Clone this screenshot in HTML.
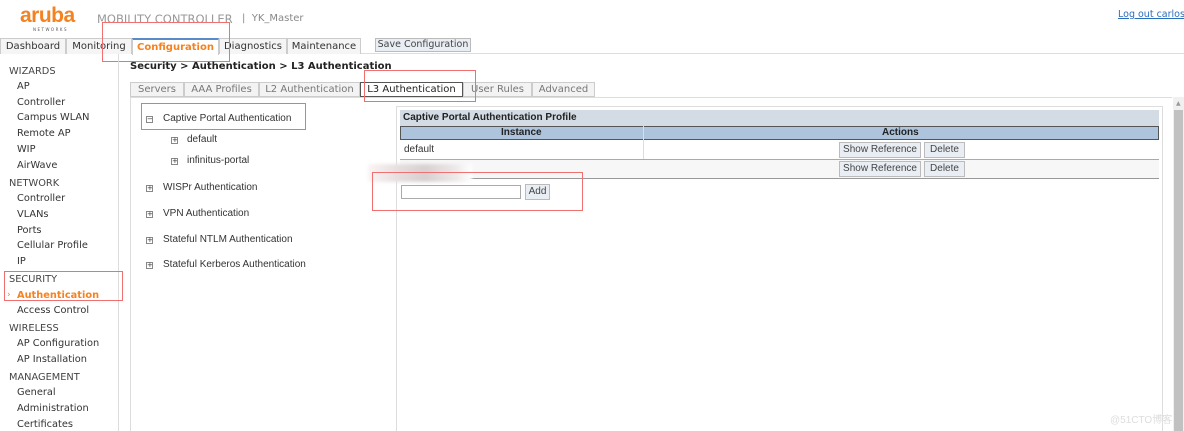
<!DOCTYPE html>
<html><head><meta charset="utf-8"><style>
*{margin:0;padding:0;box-sizing:border-box}
body{width:1184px;height:431px;overflow:hidden;background:#fff;font-family:"DejaVu Sans",Verdana,sans-serif;font-size:9.5px;color:#333;position:relative}
.a{position:absolute;white-space:nowrap}
.red{position:absolute;border:1px solid #f07070}
.tab{position:absolute;top:38px;height:16px;border:1px solid #ccc;border-bottom:none;background:#f3f3f3;font-size:10px;text-align:center;line-height:15px;color:#333}
.st{position:absolute;top:82px;height:15px;border:1px solid #ccc;background:#f3f3f3;font-size:10px;line-height:14px;text-align:center;color:#777}
.sb{position:absolute;left:17px;font-size:9.8px;color:#333}
.sh{position:absolute;left:9px;font-size:9.8px;color:#444}
.tr{position:absolute;font-family:"Liberation Sans",Tahoma,sans-serif;font-size:10px;color:#333}
.pm{position:absolute;width:7px;height:7px;border:1px solid #888;font-size:7px;line-height:5px;text-align:center;color:#333}
.btn{position:absolute;height:16px;border:1px solid #bbb;background:#e8eef4;font-size:10px;line-height:14px;text-align:center;color:#444;font-family:"Liberation Sans",Tahoma,sans-serif}
</style></head><body>
<div class="a" style="left:20px;top:4px;font-family:'Liberation Sans',sans-serif;font-weight:bold;font-size:21px;color:#f58220;letter-spacing:-0.5px">aruba</div>
<div class="a" style="left:33px;top:27px;font-size:4px;letter-spacing:1.5px;color:#555">NETWORKS</div>
<div class="a" style="left:97px;top:12px;font-size:11.5px;color:#999">MOBILITY CONTROLLER</div>
<div class="a" style="left:242px;top:13px;font-size:10px;color:#888">|&nbsp; YK_Master</div>
<div class="a" style="left:1118px;top:9px;font-size:9.5px;color:#2a6ebb;text-decoration:underline">Log out carlos</div>
<div class="a" style="left:0;top:53px;width:1184px;border-top:1px solid #ddd"></div>
<div class="tab" style="left:0;width:66px;background:#f5f5f5">Dashboard</div>
<div class="tab" style="left:66px;width:66px;background:#f5f5f5">Monitoring</div>
<div class="tab" style="left:132px;width:87px;background:#fff;border-top:2px solid #5b8ac9;color:#f58220;font-weight:bold;height:17px">Configuration</div>
<div class="tab" style="left:219px;width:68px;background:#f5f5f5">Diagnostics</div>
<div class="tab" style="left:287px;width:74px;background:#f5f5f5">Maintenance</div>
<div class="btn" style="left:375px;top:38px;width:96px;height:14px;line-height:12px;font-family:'DejaVu Sans',sans-serif;font-size:9.5px">Save Configuration</div>
<div class="red" style="left:102px;top:22px;width:128px;height:40px"></div>
<div class="a" style="left:118px;top:54px;height:377px;border-left:1px solid #ddd"></div>
<div class="sh" style="top:66px">WIZARDS</div>
<div class="sb" style="top:81px">AP</div><div class="sb" style="top:97px">Controller</div><div class="sb" style="top:112px">Campus WLAN</div><div class="sb" style="top:128px">Remote AP</div><div class="sb" style="top:144px">WIP</div><div class="sb" style="top:160px">AirWave</div>
<div class="sh" style="top:178px">NETWORK</div>
<div class="sb" style="top:193px">Controller</div><div class="sb" style="top:209px">VLANs</div><div class="sb" style="top:225px">Ports</div><div class="sb" style="top:240px">Cellular Profile</div><div class="sb" style="top:256px">IP</div>
<div class="sh" style="top:274px">SECURITY</div>
<div class="a" style="left:7px;top:290px;color:#f58220;font-size:9px">›</div>
<div class="sb" style="top:290px;color:#f58220;font-weight:bold">Authentication</div>
<div class="sb" style="top:305px">Access Control</div>
<div class="sh" style="top:323px">WIRELESS</div>
<div class="sb" style="top:338px">AP Configuration</div><div class="sb" style="top:354px">AP Installation</div>
<div class="sh" style="top:372px">MANAGEMENT</div>
<div class="sb" style="top:387px">General</div><div class="sb" style="top:403px">Administration</div><div class="sb" style="top:419px">Certificates</div>
<div class="red" style="left:4px;top:271px;width:119px;height:30px"></div>
<div class="a" style="left:130px;top:61px;font-size:10px;font-weight:bold;color:#222">Security &gt; Authentication &gt; L3 Authentication</div>
<div class="st" style="left:130px;width:54px">Servers</div>
<div class="st" style="left:184px;width:75px">AAA Profiles</div>
<div class="st" style="left:259px;width:101px">L2 Authentication</div>
<div class="st" style="left:360px;width:103px;background:#fff;border-color:#555;color:#222">L3 Authentication</div>
<div class="st" style="left:463px;width:69px">User Rules</div>
<div class="st" style="left:532px;width:63px">Advanced</div>
<div class="a" style="left:130px;top:97px;width:1042px;border-top:1px solid #ddd"></div>
<div class="a" style="left:130px;top:97px;height:334px;border-left:1px solid #ddd"></div>
<div class="red" style="left:364px;top:70px;width:112px;height:32px"></div>
<div class="pm" style="left:146px;top:116px">−</div><div class="tr" style="left:163px;top:113px">Captive Portal Authentication</div>
<div class="red" style="left:141px;top:103px;width:165px;height:27px"></div>
<div class="pm" style="left:171px;top:137px">+</div><div class="tr" style="left:187px;top:134px">default</div>
<div class="pm" style="left:171px;top:158px">+</div><div class="tr" style="left:187px;top:155px">infinitus-portal</div>
<div class="pm" style="left:146px;top:185px">+</div><div class="tr" style="left:163px;top:182px">WISPr Authentication</div>
<div class="pm" style="left:146px;top:211px">+</div><div class="tr" style="left:163px;top:208px">VPN Authentication</div>
<div class="pm" style="left:146px;top:237px">+</div><div class="tr" style="left:163px;top:234px">Stateful NTLM Authentication</div>
<div class="pm" style="left:146px;top:262px">+</div><div class="tr" style="left:163px;top:259px">Stateful Kerberos Authentication</div>
<div class="a" style="left:396px;top:106px;width:767px;height:325px;border:1px solid #ddd;border-bottom:none"></div>
<div class="a" style="left:400px;top:110px;width:759px;height:16px;background:#d3dbe4;font-family:'Liberation Sans',Tahoma,sans-serif;font-weight:bold;font-size:10px;line-height:16px;padding-left:3px;color:#222">Captive Portal Authentication Profile</div>
<div class="a" style="left:400px;top:126px;width:759px;height:14px;background:#adc4dc;border:1px solid #555;font-family:'Liberation Sans',Tahoma,sans-serif;font-weight:bold;font-size:10px;line-height:12px;color:#222">
<span class="a" style="left:100px;top:0">Instance</span><span class="a" style="left:481px;top:0">Actions</span></div>
<div class="a" style="left:643px;top:126px;height:53px;border-left:1px solid #ddd"></div>
<div class="tr" style="left:404px;top:144px">default</div>
<div class="a" style="left:400px;top:159px;width:759px;border-top:1px solid #aaa"></div>
<div class="a" style="left:400px;top:160px;width:759px;height:18px;background:#f7f7f7"></div>
<div class="a" style="left:400px;top:178px;width:759px;border-top:1px solid #999"></div>
<div class="btn" style="left:839px;top:142px;width:82px">Show Reference</div>
<div class="btn" style="left:924px;top:142px;width:41px">Delete</div>
<div class="btn" style="left:839px;top:161px;width:82px">Show Reference</div>
<div class="btn" style="left:924px;top:161px;width:41px">Delete</div>
<div class="a" style="left:368px;top:164px;width:104px;height:18px;background:linear-gradient(90deg,#fbf4f4,#e6dede 30%,#d8d0d0 55%,#eeeaea 85%,#fff);filter:blur(1.5px)"></div>
<div class="a" style="left:401px;top:185px;width:120px;height:14px;border:1px solid #aaa;background:#fff"></div>
<div class="btn" style="left:525px;top:184px;width:25px">Add</div>
<div class="red" style="left:372px;top:172px;width:211px;height:39px"></div>
<div class="a" style="left:1173px;top:97px;width:11px;height:334px;background:#f0f0f0"></div>
<div class="a" style="left:1174px;top:110px;width:9px;height:321px;background:#c1c1c1"></div>
<div class="a" style="left:1176px;top:100px;font-size:6px;color:#999">▲</div>
<div class="a" style="left:1110px;top:411px;font-size:10px;color:#ddd;font-family:'Liberation Sans','Noto Sans CJK SC',sans-serif">@51CTO博客</div>
</body></html>
